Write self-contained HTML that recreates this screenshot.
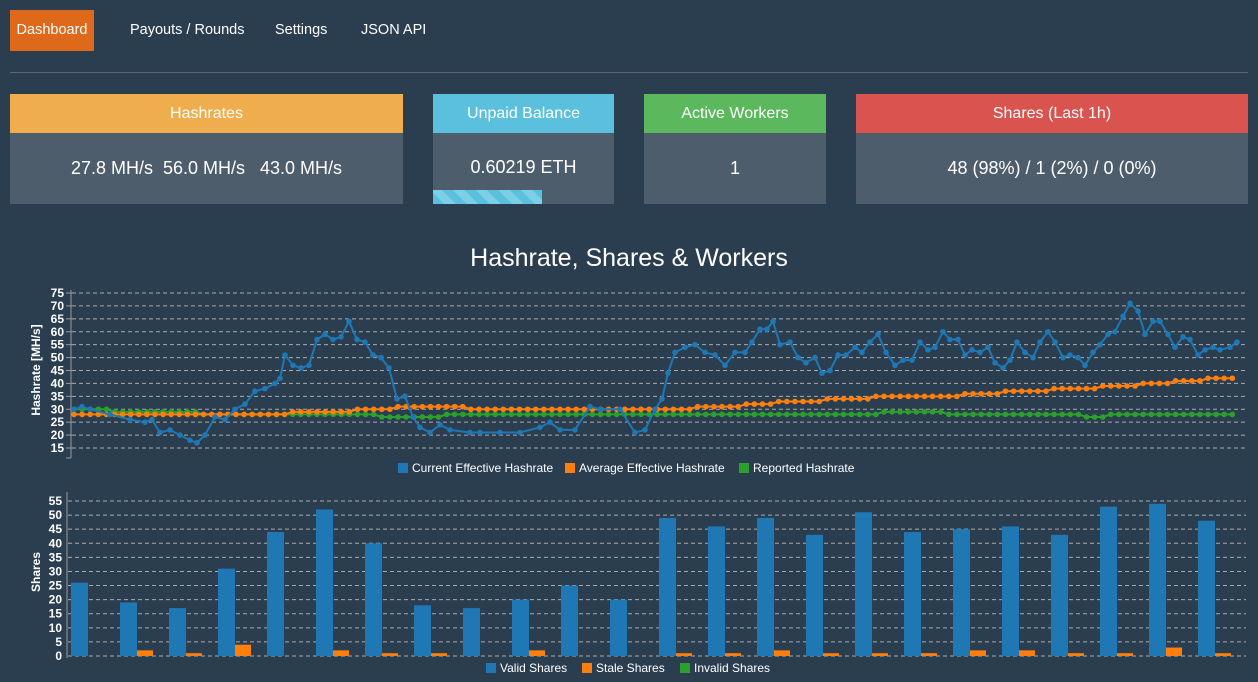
<!DOCTYPE html>
<html><head><meta charset="utf-8"><style>
body{margin:0;background:#2b3e50;font-family:"Liberation Sans",sans-serif;color:#fff;width:1258px;height:682px;overflow:hidden;position:relative}
.nav a{position:absolute;top:10px;height:41px;line-height:41px;font-size:14.5px;color:#fff;text-decoration:none}
.hr{position:absolute;left:10px;width:1238px;top:72px;height:1px;background:#56687a}
.card{position:absolute;top:94px;height:110px;background:#4e5d6c}
.card .h{height:39px;line-height:39px;text-align:center;font-size:16px}
.card .b{text-align:center;font-size:18px;line-height:70px}
h1{position:absolute;top:244px;left:0;width:1258px;text-align:center;font-weight:normal;font-size:25px;margin:0}
svg{position:absolute;left:0;top:0}
</style></head><body>
<div class="nav">
<a style="left:10px;width:84px;background:#df691a;text-align:center">Dashboard</a>
<a style="left:130px">Payouts / Rounds</a>
<a style="left:275px">Settings</a>
<a style="left:361px">JSON API</a>
</div>
<div class="hr"></div>
<div class="card" style="left:10px;width:393px"><div class="h" style="background:#f0ad4e">Hashrates</div><div class="b">27.8 MH/s &nbsp;56.0 MH/s &nbsp; 43.0 MH/s</div></div>
<div class="card" style="left:433px;width:181px"><div class="h" style="background:#5bc0de">Unpaid Balance</div><div class="b" style="line-height:68px">0.60219 ETH</div>
<div style="position:absolute;left:0;bottom:0;width:109px;height:14px;background:repeating-linear-gradient(45deg,#5bc0de 0 8px,#7dcfe8 8px 16px)"></div></div>
<div class="card" style="left:644px;width:182px"><div class="h" style="background:#5cb85c">Active Workers</div><div class="b">1</div></div>
<div class="card" style="left:856px;width:392px"><div class="h" style="background:#d9534f">Shares (Last 1h)</div><div class="b">48 (98%) / 1 (2%) / 0 (0%)</div></div>
<h1>Hashrate, Shares &amp; Workers</h1>
<svg id="s" width="1258" height="682" font-family="Liberation Sans, sans-serif" font-size="12" font-weight="bold"></svg>
<script>
var s=document.getElementById('s'),o='';
function Y1(v){return 448-(v-15)*155/60}
for(var v=15;v<=75;v+=5){var y=Y1(v);o+='<line x1="72" x2="1246" y1="'+y+'" y2="'+y+'" stroke="#aaa" stroke-dasharray="4,3" stroke-width="1"/><line x1="66" x2="72" y1="'+y+'" y2="'+y+'" stroke="#999"/><text x="64" y="'+(y+4)+'" fill="#fff" text-anchor="end">'+v+'</text>';}
o+='<line x1="71" x2="71" y1="290" y2="458" stroke="#999"/><line x1="66" x2="71" y1="458" y2="458" stroke="#999"/>';
o+='<text transform="translate(40,370) rotate(-90)" fill="#fff" text-anchor="middle" font-size="12">Hashrate [MH/s]</text>';
function step(k,x){var v=k[0][1];for(var i=0;i<k.length;i++)if(x>=k[i][0])v=k[i][1];return v;}
var B=[[74,30],[82,31],[90,30],[110,28],[130,26],[145,25],[152,26],[160,21],[170,22],[180,20],[190,18],[197,17],[205,20],[215,27],[225,26],[235,30],[245,32],[255,37],[265,38],[275,40],[280,42],[285,51],[293,47],[301,46],[309,47],[317,57],[325,59],[333,57],[341,58],[349,64],[357,57],[365,56],[373,51],[381,50],[389,46],[397,34],[405,35],[413,27],[420,23],[430,21],[440,24],[450,22],[470,21],[480,21],[500,21],[520,21],[540,23],[550,25],[560,22],[575,22],[590,31],[600,30],[620,30],[635,21],[645,22],[655,30],[662,34],[668,44],[675,52],[685,54],[695,55],[705,52],[715,51],[725,47],[735,52],[745,52],[752,56],[760,61],[767,61],[773,64],[780,55],[790,56],[798,50],[806,48],[815,50],[822,44],[830,45],[838,51],[846,51],[855,54],[862,52],[870,56],[878,59],[886,52],[895,47],[903,49],[912,49],[920,56],[928,53],[935,54],[943,60],[950,57],[958,57],[965,51],[972,53],[980,52],[988,54],[995,48],[1003,46],[1010,49],[1017,56],[1025,52],[1033,50],[1040,56],[1048,60],[1055,56],[1063,50],[1070,51],[1078,50],[1085,47],[1093,52],[1100,55],[1108,59],[1115,60],[1123,66],[1130,71],[1138,68],[1145,59],[1153,64],[1160,64],[1168,59],[1175,54],[1183,58],[1190,57],[1198,51],[1205,53],[1213,54],[1220,53],[1230,54],[1237,56]];
var O=[[74,28],[285,29],[350,30],[395,31],[470,30],[690,31],[740,32],[775,33],[820,34],[870,35],[960,36],[1005,37],[1050,38],[1100,39],[1140,40],[1170,41],[1200,42],[1237,43]];
var G=[[74,30],[110,29],[200,28],[375,27],[440,28],[880,29],[945,28],[1080,27],[1110,28]];
function line(pts,c){var p='',d='';pts.forEach(function(q){var y=Y1(q[1]);p+=q[0]+','+y+' ';d+='<circle cx="'+q[0]+'" cy="'+y+'" r="2.8" fill="'+c+'"/>';});return '<polyline points="'+p+'" fill="none" stroke="'+c+'" stroke-width="2"/>'+d;}
var op=[],gp=[];for(var x=74;x<=1238;x+=8.1){op.push([x,step(O,x)]);gp.push([x,step(G,x)]);}
o+=line(gp,'#2ca02c')+line(op,'#ff7f0e')+line(B,'#1f77b4');
function leg(x,y,c,t){return '<rect x="'+x+'" y="'+(y-9)+'" width="10" height="10" fill="'+c+'"/><text x="'+(x+14)+'" y="'+y+'" fill="#fff" font-weight="normal">'+t+'</text>';}
o+=leg(398,472,'#1f77b4','Current Effective Hashrate')+leg(565,472,'#ff7f0e','Average Effective Hashrate')+leg(739,472,'#2ca02c','Reported Hashrate');
function Y2(v){return 656-v*155/55}
for(var v=0;v<=55;v+=5){var y=Y2(v);o+='<line x1="68" x2="1246" y1="'+y+'" y2="'+y+'" stroke="#aaa" stroke-dasharray="4,3"/><text x="62" y="'+(y+4)+'" fill="#fff" text-anchor="end">'+v+'</text>';}
o+='<line x1="67" x2="67" y1="492" y2="658" stroke="#999"/>';
o+='<text transform="translate(40,572) rotate(-90)" fill="#fff" text-anchor="middle">Shares</text>';
var bv=[26,19,17,31,44,52,40,18,17,20,25,20,49,46,49,43,51,44,45,46,43,53,54,48],sv=[0,2,1,4,0,2,1,1,0,2,0,0,1,1,2,1,1,1,2,2,1,1,3,1];
for(var i=0;i<24;i++){var x=71+i*49;o+='<rect x="'+x+'" y="'+Y2(bv[i])+'" width="17" height="'+(656-Y2(bv[i]))+'" fill="#1f77b4"/>';if(sv[i])o+='<rect x="'+(x+17)+'" y="'+Y2(sv[i])+'" width="16" height="'+(656-Y2(sv[i]))+'" fill="#ff7f0e"/>';}
o+=leg(486,672,'#1f77b4','Valid Shares')+leg(582,672,'#ff7f0e','Stale Shares')+leg(680,672,'#2ca02c','Invalid Shares');
s.innerHTML=o;
</script>
</body></html>
